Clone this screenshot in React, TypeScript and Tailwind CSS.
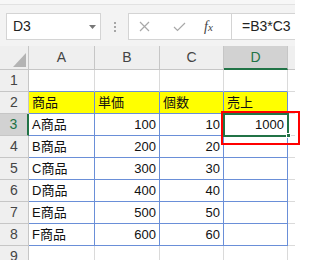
import React from "react";

const cols = ["A", "B", "C", "D"];

const data = [
  ["", "", "", ""],
  ["商品", "単価", "個数", "売上"],
  ["A商品", "100", "10", "1000"],
  ["B商品", "200", "20", ""],
  ["C商品", "300", "30", ""],
  ["D商品", "400", "40", ""],
  ["E商品", "500", "50", ""],
  ["F商品", "600", "60", ""],
  ["", "", "", ""],
];

const font = "font-['Liberation_Sans','Noto_Sans_CJK_JP',sans-serif]";

function FormulaBar() {
  return (
    <div className="h-[46px] bg-[#f3f3f3]">
      <div className="h-[4px] bg-[#f7f7f7]" />
      <div className="h-[42px] border-t border-[#e2e2e2] flex items-start pt-[8px] pl-[6px]">
        <div className="w-[95px] h-[27px] bg-white border border-[#d4d4d4] flex items-center justify-between pl-[6px] pr-[4px]">
          <span className="text-[14px] text-[#222]">D3</span>
          <svg width="7" height="4" viewBox="0 0 7 4">
            <path d="M0 0 L7 0 L3.5 4 Z" fill="#777" />
          </svg>
        </div>
        <div className="w-[27px] h-[27px] flex flex-col items-center justify-center gap-[2px]">
          <span className="w-[2px] h-[2px] bg-[#a6a6a6]" />
          <span className="w-[2px] h-[2px] bg-[#a6a6a6]" />
          <span className="w-[2px] h-[2px] bg-[#a6a6a6]" />
        </div>
        <div className="flex-1 h-[27px] bg-white border border-[#d4d4d4] border-r-0 flex items-center">
          <div className="w-[103px] h-full flex items-center border-r border-[#d4d4d4]">
            <svg width="11" height="11" viewBox="0 0 11 11" className="ml-[10px]">
              <path d="M1 1 L10 10 M10 1 L1 10" stroke="#a8a8a8" strokeWidth="1.2" />
            </svg>
            <svg width="13" height="10" viewBox="0 0 13 10" className="ml-[23px]">
              <path d="M1 5 L4.5 8.5 L12 1" stroke="#a8a8a8" strokeWidth="1.2" fill="none" />
            </svg>
            <span className="ml-[18px] font-['Liberation_Serif',serif] italic text-[14px] text-[#444]">
              f<span className="text-[11px]">x</span>
            </span>
          </div>
          <span className="ml-[10px] text-[14px] text-[#222]">=B3*C3</span>
        </div>
      </div>
    </div>
  );
}

export default function App() {
  return (
    <div className={`w-[313px] h-[260px] bg-white overflow-hidden ${font}`}>
      <div className="w-[295px] relative">
        <FormulaBar />
        <div className="grid grid-cols-[29px_66px_65px_64px_64px_7px] bg-[#f3f3f3]">
          <div className="h-[24px] border-b border-r border-[#c6c6c6] bg-[#efefef] flex items-end justify-end pr-[2px] pb-[2px]">
            <svg width="13" height="14" viewBox="0 0 13 14">
              <path d="M13 0 L13 14 L0 14 Z" fill="#b4b4b4" />
            </svg>
          </div>
          {cols.map((c) => (
            <div
              key={c}
              className={
                c === "D"
                  ? "h-[24px] bg-[#d2d2d2] border-b-2 border-[#217346] border-r border-r-[#c6c6c6] flex items-center justify-center text-[14px] text-[#217346]"
                  : "h-[24px] bg-[#efefef] border-b border-r border-[#c6c6c6] flex items-center justify-center text-[14px] text-[#444]"
              }
            >
              {c}
            </div>
          ))}
          <div className="h-[24px] bg-[#efefef] border-b border-[#c6c6c6]" />

          {data.map((row, i) => {
            const n = i + 1;
            const blue = n >= 2 && n <= 8;
            return (
              <React.Fragment key={n}>
                <div
                  className={
                    n === 3
                      ? "h-[22px] bg-[#d2d2d2] border-r-2 border-[#217346] border-b border-b-[#c6c6c6] flex items-center justify-center text-[14px] text-[#217346]"
                      : "h-[22px] bg-[#efefef] border-r border-b border-[#c6c6c6] flex items-center justify-center text-[14px] text-[#444]"
                  }
                >
                  {n}
                </div>
                {row.map((v, j) => (
                  <div
                    key={j}
                    className={`h-[22px] border-r border-b flex items-center text-[13px] text-[#111] ${
                      n === 2 ? "bg-[#ffff00]" : "bg-white"
                    } ${blue ? "border-[#6a8fd8]" : n === 1 ? "border-r-[#dadada] border-b-[#6a8fd8]" : "border-[#dadada]"} ${
                      j === 0 || n === 2 ? "justify-start pl-[3px]" : "justify-end pr-[3px]"
                    }`}
                  >
                    {v}
                  </div>
                ))}
                <div className="h-[22px] bg-white border-b border-[#dadada]" />
              </React.Fragment>
            );
          })}
        </div>

        {/* selected cell D3 */}
        <div className="absolute left-[223px] top-[113px] w-[66px] h-[24px] border-2 border-[#217346]" />
        <div className="absolute left-[286px] top-[133px] w-[5px] h-[5px] bg-[#217346] border border-white" />
        {/* red highlight */}
        <div className="absolute left-[221px] top-[111px] w-[79px] h-[34px] border-2 border-[#ff0000]" />
      </div>
    </div>
  );
}
